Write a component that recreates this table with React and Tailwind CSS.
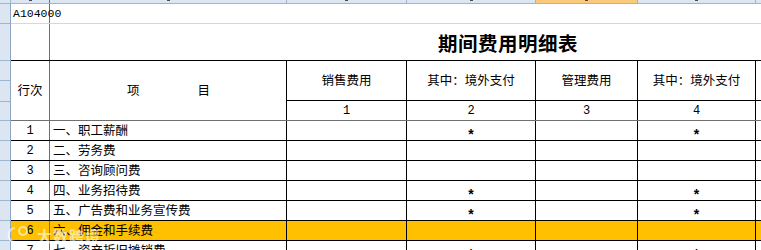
import React from 'react';

const CJK = { fontFamily: '"Noto Sans CJK SC", sans-serif' };
const MONO = { fontFamily: '"Liberation Mono", monospace' };

const colWidths = ['w-[39px]', 'w-[237px]', 'w-[120px]', 'w-[129px]', 'w-[102px]', 'w-[118px]'];

const rows = [
  { no: '1', name: '一、职工薪酬', star: true },
  { no: '2', name: '二、劳务费' },
  { no: '3', name: '三、咨询顾问费' },
  { no: '4', name: '四、业务招待费', star: true },
  { no: '5', name: '五、广告费和业务宣传费', star: true },
  { no: '6', name: '六、佣金和手续费', orange: true },
  { no: '7', name: '七、资产折旧摊销费', star: true },
];

function Star({ show }) {
  if (!show) return null;
  return (
    <span className="translate-y-[3px] text-[14px] font-bold leading-none" style={{ fontFamily: '"Liberation Sans", sans-serif' }}>
      *
    </span>
  );
}

function ColumnStrip() {
  return (
    <div className="flex h-[4px] border-b border-[#9eb6ce] bg-[#dce6f2]">
      <div className="w-[11px] shrink-0 border-r border-[#9eb6ce]" />
      {colWidths.map((w, i) => (
        <div
          key={i}
          className={`${w} flex shrink-0 justify-center border-r ${
            i === 0 ? 'border-[#6e6e6e]' : i === 4 ? 'border-[#f0a040] bg-[#f9c97c]' : 'border-[#9eb6ce]'
          }`}
        >
          <span className="h-[1px] w-[3px] bg-[#4a4a4a]" />
        </div>
      ))}
      <div className="flex-1" />
    </div>
  );
}

function RowStrip() {
  const heights = ['h-[20px]', 'h-[37px]', 'h-[20px]', 'h-[21px]', 'h-[19px]', 'h-[20px]', 'h-[20px]', 'h-[20px]', 'h-[20px]', 'h-[20px]', 'h-[20px]', 'h-[20px]'];
  return (
    <div className="flex w-[11px] shrink-0 flex-col border-r border-[#8ea6c2] bg-[#dce6f2]">
      {heights.map((h, i) => (
        <div key={i} className={`${h} shrink-0 border-b border-[#9eb6ce]`} />
      ))}
    </div>
  );
}

function HeaderBlock() {
  const heads = ['销售费用', '其中：境外支付', '管理费用', '其中：境外支付'];
  return (
    <div className="flex h-[60px] border-b border-[#707070]">
      <div className={`${colWidths[0]} flex shrink-0 items-center justify-center border-r border-[#6e6e6e] text-[12.5px]`}>
        行次
      </div>
      <div className={`${colWidths[1]} flex shrink-0 items-center justify-center gap-[58px] border-r border-black pl-[1px] text-[12.5px]`}>
        <span>项</span>
        <span>目</span>
      </div>
      {heads.map((h, i) => (
        <div key={i} className={`${colWidths[i + 2]} flex shrink-0 flex-col border-r border-black`}>
          <div className="flex h-[40px] items-center justify-center border-b border-black text-[12.5px]">{h}</div>
          <div className="flex flex-1 items-center justify-center text-[12px]" style={MONO}>{i + 1}</div>
        </div>
      ))}
      <div className="flex flex-1 flex-col">
        <div className="h-[40px] border-b border-black" />
      </div>
    </div>
  );
}

function DataRow({ row }) {
  const bg = row.orange ? 'bg-[#ffc000]' : 'bg-white';
  return (
    <div className={`flex h-[20px] shrink-0 border-b border-black ${bg}`}>
      <div className={`${colWidths[0]} flex shrink-0 items-center justify-center border-r border-[#6e6e6e] text-[12px]`} style={MONO}>
        {row.no}
      </div>
      <div className={`${colWidths[1]} flex shrink-0 items-center border-r border-black pl-[3px] text-[12.5px]`}>
        {row.name}
      </div>
      <div className={`${colWidths[2]} shrink-0 border-r border-black`} />
      <div className={`${colWidths[3]} flex shrink-0 items-center justify-center border-r border-black`}>
        <Star show={row.star} />
      </div>
      <div className={`${colWidths[4]} shrink-0 border-r border-black`} />
      <div className={`${colWidths[5]} flex shrink-0 items-center justify-center border-r border-black`}>
        <Star show={row.star} />
      </div>
      <div className="flex-1" />
    </div>
  );
}

export default function App() {
  return (
    <div className="relative h-[250px] w-[761px] overflow-hidden bg-white text-black" style={CJK}>
      <ColumnStrip />
      <div className="flex">
        <RowStrip />
        <div className="flex min-w-0 flex-1 flex-col">
          <div className="flex h-[20px] shrink-0 border-b border-[#d0d7e5]">
            <div className={`${colWidths[0]} flex shrink-0 items-center border-r border-[#6e6e6e] pl-[2px]`}>
              <span className="relative z-10 text-[11.5px] leading-none" style={MONO}>A104000</span>
            </div>
            <div className="flex-1" />
          </div>
          <div className="flex h-[37px] shrink-0 border-b border-black">
            <div className={`${colWidths[0]} shrink-0 border-r border-[#6e6e6e]`} />
            <div className="flex flex-1 items-center pl-[388px] pt-[1px]">
              <span className="text-[19.5px] font-bold leading-none tracking-[0.5px]">期间费用明细表</span>
            </div>
          </div>
          <HeaderBlock />
          {rows.map((r) => (
            <DataRow key={r.no} row={r} />
          ))}
        </div>
      </div>

      {/* faint watermark over the bottom-left corner */}
      <div className="pointer-events-none absolute left-[3px] top-[224px] flex items-center gap-[4px] text-white/60">
        <svg width="30" height="22" viewBox="0 0 30 22" fill="none" stroke="currentColor" strokeWidth="2">
          <path d="M12 4 C4 4 3 18 12 18" />
          <circle cx="20" cy="7" r="4" />
        </svg>
        <span className="text-[15px] font-bold leading-none tracking-[1px]">大数跨境</span>
      </div>
    </div>
  );
}
